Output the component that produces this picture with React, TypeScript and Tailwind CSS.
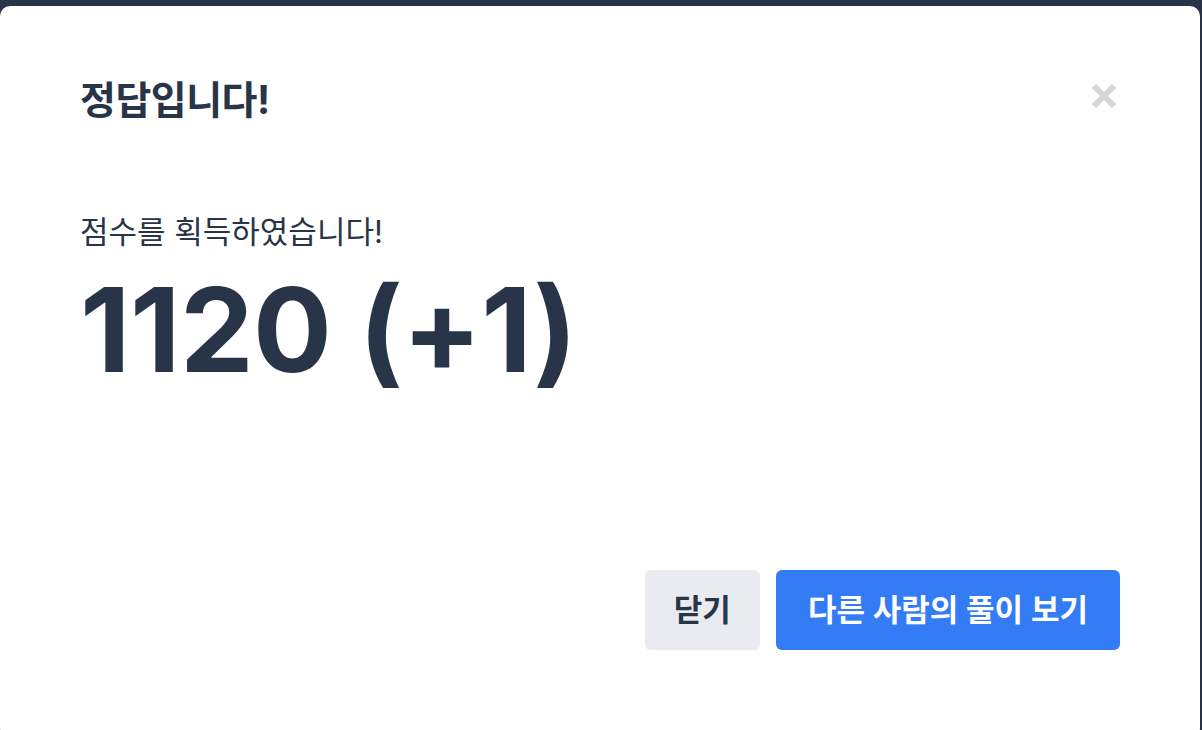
import React from 'react';

const font = "font-['Inter','Noto_Sans_CJK_KR',sans-serif]";

const CloseIcon: React.FC = () => (
    <svg width="28" height="28" viewBox="0 0 28 28" className="text-[#d6d6d6]">
        <path d="M4 4 L24 24 M24 4 L4 24" stroke="currentColor" strokeWidth="6" strokeLinecap="butt" />
    </svg>
);

const App: React.FC = () => {
    return (
        <div className={`h-[730px] w-[1202px] bg-[#283347] pt-[6px] pr-[2px] overflow-hidden ${font}`}>
            <div className="h-[732px] bg-white rounded-[10px] flex flex-col px-20 pb-[88px] text-[#283548]">
                <div className="flex items-center justify-between pt-[74px]">
                    <h2 className="text-[39px] leading-[40px] font-bold tracking-[-0.5px]">정답입니다!</h2>
                    <button className="mr-[2px] mb-[9px]">
                        <CloseIcon />
                    </button>
                </div>

                <p className="mt-[94px] text-[31px] leading-[36px]">점수를 획득하였습니다!</p>
                <p className="mt-[20px] text-[117px] leading-[120px] font-bold tracking-[-0.5px]">1120 (+1)</p>

                <div className="mt-auto flex justify-end gap-4">
                    <button className="h-20 px-[29px] rounded-md bg-[#e9ebf0] text-[31px] font-semibold text-[#283548]">
                        닫기
                    </button>
                    <button className="h-20 px-[32px] rounded-md bg-[#337cf5] text-[31px] font-semibold text-white">
                        다른 사람의 풀이 보기
                    </button>
                </div>
            </div>
        </div>
    );
};

export default App;
